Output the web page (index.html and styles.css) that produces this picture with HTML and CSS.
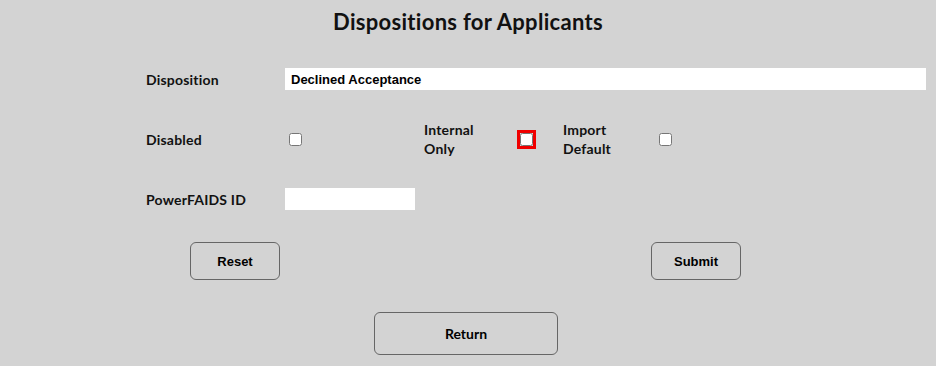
FILE: index.html
```
<!DOCTYPE html>
<html lang="en">
<head>
    <meta charset="UTF-8">
    <meta name="viewport" content="width=device-width, initial-scale=1.0">
    <title>Dispositions for Applicants</title>
    <link rel="stylesheet" href="styles.css">
</head>
<body>

    <h1 class="page-title">Dispositions for Applicants</h1>

    <form class="disp-form" onsubmit="return false">
        <div class="form-row">
            <label class="field-label" for="disposition">Disposition</label>
            <input type="text" id="disposition" class="text-input wide" value="Declined Acceptance">
        </div>

        <div class="form-row flags">
            <label class="field-label" for="disabled">Disabled</label>
            <div class="check-cell"><input type="checkbox" id="disabled"></div>
            <label class="field-label two-line" for="internalOnly">Internal<br>Only</label>
            <div class="check-cell"><input type="checkbox" id="internalOnly" class="focused"></div>
            <label class="field-label two-line" for="importDefault">Import<br>Default</label>
            <div class="check-cell"><input type="checkbox" id="importDefault"></div>
        </div>

        <div class="form-row">
            <label class="field-label" for="powerfaids">PowerFAIDS ID</label>
            <input type="text" id="powerfaids" class="text-input short">
        </div>

        <div class="actions">
            <button type="reset" class="btn small">Reset</button>
            <button type="submit" class="btn small">Submit</button>
        </div>

        <div class="return-row">
            <button type="button" class="btn return">Return</button>
        </div>
    </form>

</body>
</html>
```
FILE: styles.css
```
body {
    font-family: Lato, "Open Sans", sans-serif;
    background-color: #d3d3d3;
    color: #111;
    margin: 0;
    padding: 0;
}

.page-title {
    margin: 0;
    padding-top: 8px;
    line-height: 28px;
    font-size: 22px;
    letter-spacing: 0.3px;
    font-weight: bold;
    text-align: center;
}

.disp-form {
    margin-top: 13px;
    padding-left: 146px;
    padding-right: 10px;
}

.form-row {
    display: flex;
    align-items: center;
    height: 60px;
}

.field-label {
    width: 139px;
    flex-shrink: 0;
    font-size: 14px;
    letter-spacing: 0.2px;
    font-weight: bold;
}

.text-input {
    height: 22px;
    border: none;
    padding: 0 6px;
    box-sizing: border-box;
    background-color: #fff;
    font-family: "Liberation Sans", Arial, sans-serif;
    font-size: 13px;
    font-weight: bold;
    color: #000;
}

.text-input:focus {
    outline: none;
}

.text-input.wide {
    flex-grow: 1;
}

.text-input.short {
    width: 130px;
}

/* checkbox row */
.flags {
    display: grid;
    grid-template-columns: 139px 139px 92px 47px 92px 47px;
    align-items: center;
}

.flags .field-label {
    width: auto;
}

.two-line {
    line-height: 19px;
}

.check-cell {
    display: flex;
    align-items: center;
}

.check-cell input {
    margin: 0 0 0 4px;
    width: 13px;
    height: 13px;
}

.check-cell input.focused {
    outline: 3px solid #f00000;
    outline-offset: 0;
}

.actions {
    display: flex;
    gap: 371px;
    margin-top: 13px;
    margin-left: 44px;
}

.btn {
    background-color: transparent;
    border: 1px solid #666;
    border-radius: 6px;
    color: #000;
    cursor: pointer;
}

.btn.small {
    width: 90px;
    height: 38px;
    font-family: "Liberation Sans", Arial, sans-serif;
    font-size: 13px;
    font-weight: bold;
}

.return-row {
    margin-top: 32px;
    margin-left: 228px;
}

.btn.return {
    width: 184px;
    height: 43px;
    font-family: Lato, "Open Sans", sans-serif;
    font-size: 14px;
    font-weight: bold;
}
```
